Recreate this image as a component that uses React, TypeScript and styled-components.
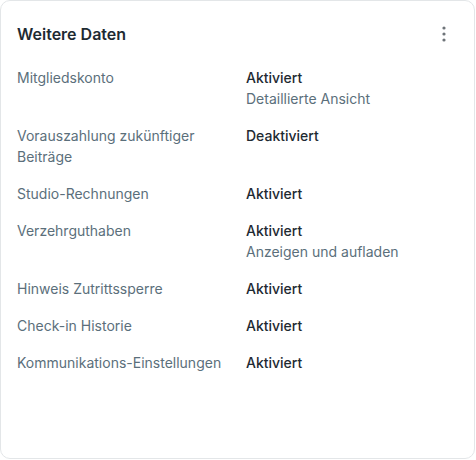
import React from 'react';
import styled, { createGlobalStyle } from 'styled-components';

const GlobalStyle = createGlobalStyle`
  html, body {
    margin: 0;
    padding: 0;
    background: #ffffff;
    font-family: Inter, "Noto Sans", sans-serif;
  }
`;

interface DataRow {
  label: string;
  value: string;
  link?: string;
}

const rows: DataRow[] = [
  { label: 'Mitgliedskonto', value: 'Aktiviert', link: 'Detaillierte Ansicht' },
  { label: 'Vorauszahlung zukünftiger Beiträge', value: 'Deaktiviert' },
  { label: 'Studio-Rechnungen', value: 'Aktiviert' },
  { label: 'Verzehrguthaben', value: 'Aktiviert', link: 'Anzeigen und aufladen' },
  { label: 'Hinweis Zutrittssperre', value: 'Aktiviert' },
  { label: 'Check-in Historie', value: 'Aktiviert' },
  { label: 'Kommunikations-Einstellungen', value: 'Aktiviert' },
];

const Card = styled.section`
  box-sizing: border-box;
  width: 475px;
  height: 459px;
  border: 1px solid #e3e6e8;
  border-radius: 10px;
  background: #ffffff;
  padding: 21px 16px 16px 16px;
`;

const Header = styled.header`
  display: flex;
  align-items: center;
  justify-content: space-between;
  height: 24px;
  margin-bottom: 21px;
`;

const Title = styled.h2`
  margin: 0;
  font-size: 16px;
  line-height: 24px;
  font-weight: 600;
  color: #1e2a32;
`;

const MenuButton = styled.button`
  display: flex;
  align-items: center;
  justify-content: center;
  width: 24px;
  height: 24px;
  padding: 0;
  margin-right: 2px;
  border: none;
  background: transparent;
  cursor: pointer;
  color: #6e7479;
`;

const List = styled.dl`
  display: flex;
  flex-direction: column;
  gap: 16px;
  margin: 0;
`;

const Row = styled.div`
  display: grid;
  grid-template-columns: 229px 1fr;
  font-size: 14px;
  line-height: 21px;
`;

const Label = styled.dt`
  margin: 0;
  color: #5b6f7b;
  padding-right: 12px;
`;

const Value = styled.dd`
  margin: 0;
  display: flex;
  flex-direction: column;
`;

const Status = styled.span`
  font-weight: 500;
  color: #1e2a32;
`;

const SubLink = styled.a`
  color: #5b6f7b;
  text-decoration: none;
  cursor: pointer;
`;

const KebabIcon = () => (
  <svg width="4" height="16" viewBox="0 0 4 16" fill="currentColor">
    <circle cx="2" cy="2" r="1.6" />
    <circle cx="2" cy="8" r="1.6" />
    <circle cx="2" cy="14" r="1.6" />
  </svg>
);

export default function App() {
  return (
    <>
      <GlobalStyle />
      <Card>
        <Header>
          <Title>Weitere Daten</Title>
          <MenuButton aria-label="Mehr Optionen">
            <KebabIcon />
          </MenuButton>
        </Header>
        <List>
          {rows.map((row) => (
            <Row key={row.label}>
              <Label>{row.label}</Label>
              <Value>
                <Status>{row.value}</Status>
                {row.link && <SubLink>{row.link}</SubLink>}
              </Value>
            </Row>
          ))}
        </List>
      </Card>
    </>
  );
}
